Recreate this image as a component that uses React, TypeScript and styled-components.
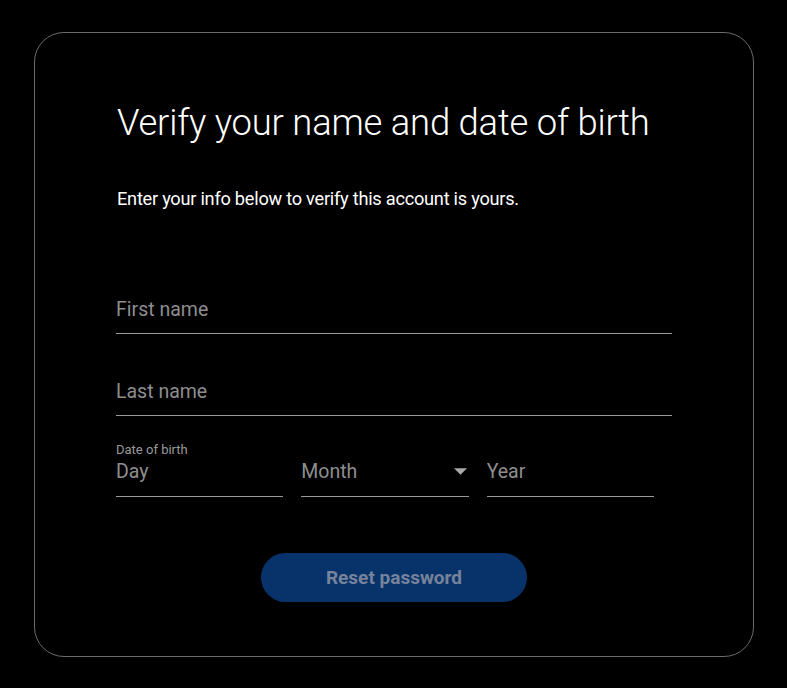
import React from 'react';
import styled, { createGlobalStyle } from 'styled-components';

const GlobalStyle = createGlobalStyle`
  html, body {
    margin: 0;
    padding: 0;
    background: #000;
  }
  body {
    font-family: Roboto, "Noto Sans", sans-serif;
    color: #fff;
  }
`;

const App: React.FC = () => {
  return (
    <>
      <GlobalStyle />
      <Page>
        <Card>
          <Title>Verify your name and date of birth</Title>
          <Subtitle>Enter your info below to verify this account is yours.</Subtitle>

          <Fields>
            <Field>
              <Input placeholder="First name" />
            </Field>
            <Field>
              <Input placeholder="Last name" />
            </Field>
          </Fields>

          <DobLabel>Date of birth</DobLabel>
          <DobRow>
            <Field>
              <Input placeholder="Day" />
            </Field>
            <Field>
              <SelectBox>
                <span>Month</span>
                <Caret viewBox="0 0 12 6">
                  <path d="M0 0h12L6 6z" fill="#aaa" />
                </Caret>
              </SelectBox>
            </Field>
            <Field>
              <Input placeholder="Year" />
            </Field>
          </DobRow>

          <ButtonRow>
            <ResetButton disabled>Reset password</ResetButton>
          </ButtonRow>
        </Card>
      </Page>
    </>
  );
};

const Page = styled.div`
  padding: 32px 34px 31px 34px;
`;

const Card = styled.div`
  box-sizing: border-box;
  width: 720px;
  height: 625px;
  border: 1px solid #6b6b6b;
  border-radius: 30px;
  padding: 68px 82px 0 81px;
`;

const Title = styled.h1`
  margin: 0 0 0 1px;
  font-size: 36.4px;
  font-weight: 300;
  letter-spacing: -0.2px;
  color: #fff;
  line-height: 44px;
`;

const Subtitle = styled.p`
  margin: 43px 0 0 1px;
  font-size: 18.2px;
  font-weight: 400;
  letter-spacing: -0.25px;
  line-height: 22px;
  color: #fff;
`;

const Fields = styled.div`
  margin-top: 75px;
  width: 556px;
  display: flex;
  flex-direction: column;
  gap: 33px;
`;

const Field = styled.div`
  border-bottom: 1px solid #9a9a9a;
  flex: 1;
`;

const Input = styled.input`
  box-sizing: border-box;
  width: 100%;
  height: 48px;
  background: transparent;
  border: none;
  outline: none;
  padding: 0;
  font-family: Roboto, "Noto Sans", sans-serif;
  font-size: 19.5px;
  color: #fff;
  &::placeholder {
    color: #8e8e8e;
  }
`;

const DobLabel = styled.div`
  margin-top: 26px;
  font-size: 13px;
  color: #9a9a9a;
  line-height: 16px;
`;

const DobRow = styled.div`
  width: 538px;
  display: flex;
  gap: 18px;
  margin-top: -6px;

  ${Input} {
    height: 44px;
    padding-bottom: 5px;
  }
`;

const SelectBox = styled.div`
  height: 44px;
  box-sizing: border-box;
  padding-bottom: 5px;
  display: flex;
  align-items: center;
  justify-content: space-between;
  font-size: 19.5px;
  color: #8e8e8e;
  padding-right: 2px;
`;

const Caret = styled.svg`
  width: 13px;
  height: 7px;
`;

const ButtonRow = styled.div`
  width: 556px;
  display: flex;
  justify-content: center;
  margin-top: 56px;
`;

const ResetButton = styled.button`
  width: 266px;
  height: 49px;
  border: none;
  border-radius: 25px;
  background: #08336a;
  color: #76839a;
  font-family: Roboto, "Noto Sans", sans-serif;
  font-size: 19px;
  font-weight: 700;
`;

export default App;
